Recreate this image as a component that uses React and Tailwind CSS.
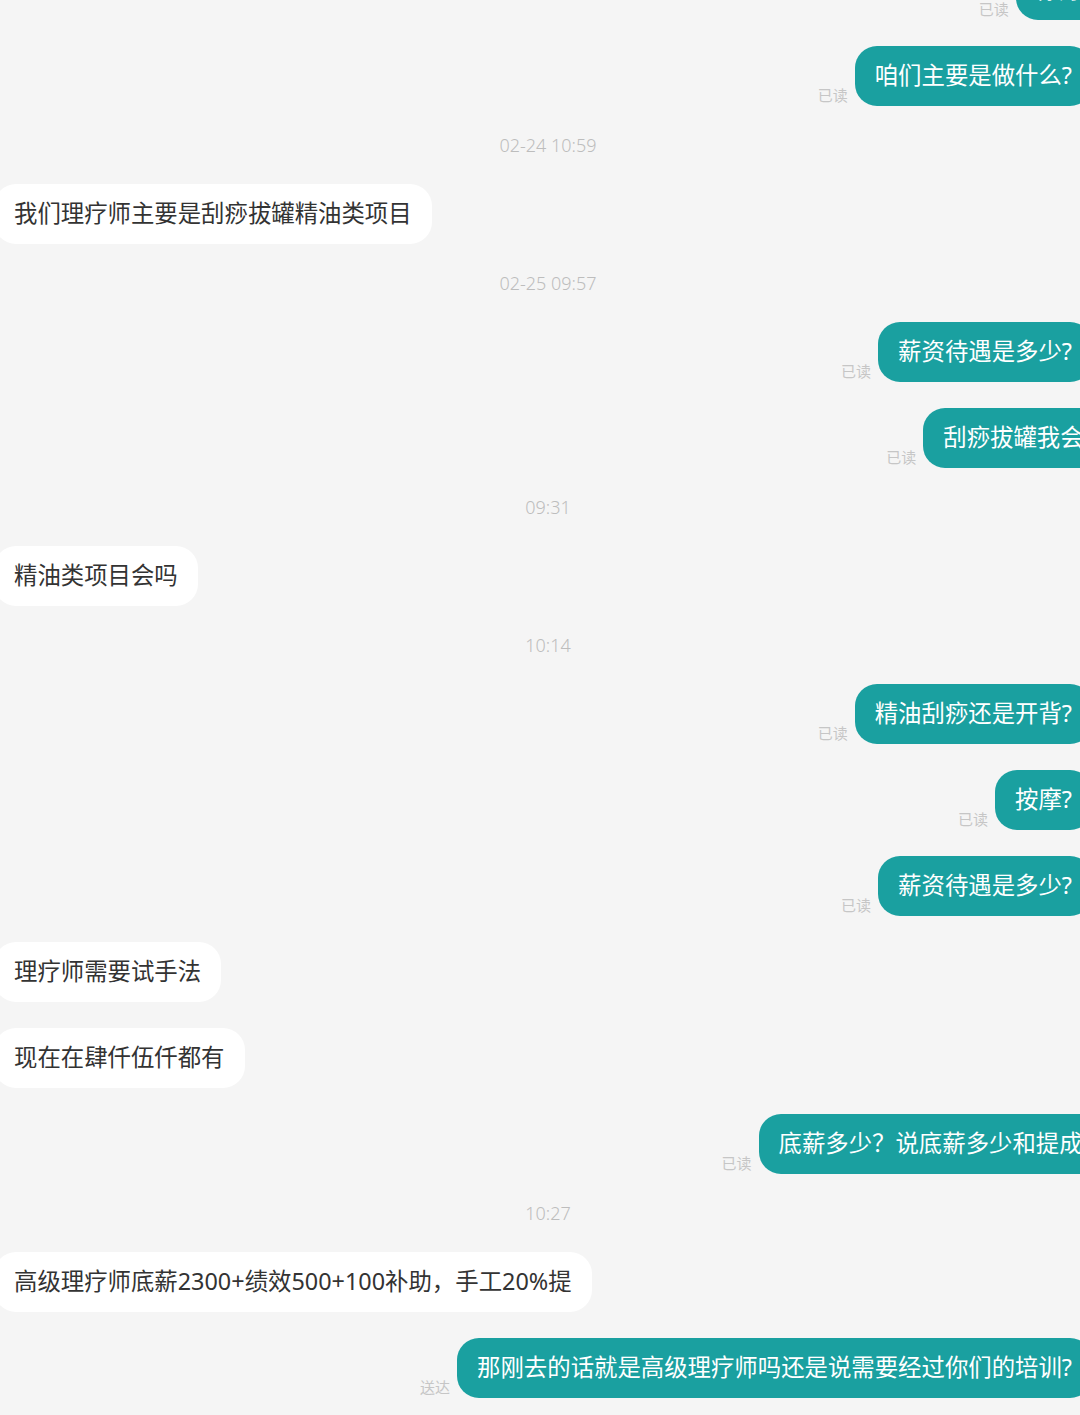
import React from 'react';

const FONT = { fontFamily: '"Noto Sans", "Noto Sans CJK SC", sans-serif' };

const items = [
  { type: 'out', text: '你好呀', status: '已读', shift: 'mr-[-24px]' },
  { type: 'out', text: '咱们主要是做什么?', status: '已读' },
  { type: 'time', text: '02-24 10:59' },
  { type: 'in', text: '我们理疗师主要是刮痧拔罐精油类项目' },
  { type: 'time', text: '02-25 09:57' },
  { type: 'out', text: '薪资待遇是多少?', status: '已读' },
  { type: 'out', text: '刮痧拔罐我会的', status: '已读', shift: 'mr-[-25px]' },
  { type: 'time', text: '09:31' },
  { type: 'in', text: '精油类项目会吗' },
  { type: 'time', text: '10:14' },
  { type: 'out', text: '精油刮痧还是开背?', status: '已读' },
  { type: 'out', text: '按摩?', status: '已读' },
  { type: 'out', text: '薪资待遇是多少?', status: '已读' },
  { type: 'in', text: '理疗师需要试手法' },
  { type: 'in', text: '现在在肆仟伍仟都有' },
  { type: 'out', text: '底薪多少？说底薪多少和提成呀', status: '已读', shift: 'mr-[-24px]' },
  { type: 'time', text: '10:27' },
  { type: 'in', text: '高级理疗师底薪2300+绩效500+100补助，手工20%提' },
  { type: 'out', text: '那刚去的话就是高级理疗师吗还是说需要经过你们的培训?', status: '送达' },
];

const TimeStamp = ({ text }) => (
  <div className="h-[26px] flex items-center justify-center text-[18px] font-light text-[#bdbdbd]">
    {text}
  </div>
);

const Incoming = ({ text }) => (
  <div className="flex justify-start">
    <div className="h-[60px] flex items-center px-5 rounded-[22px] bg-white text-[23.4px] text-[#333333] whitespace-nowrap">
      {text}
    </div>
  </div>
);

const Outgoing = ({ text, status, shift }) => (
  <div className={`flex justify-end items-end gap-[7px] ${shift || 'mr-[10px]'}`}>
    <span className="text-[15px] leading-[20px] mb-[1px] text-[#c6c6c6]">{status}</span>
    <div className="h-[60px] flex items-center px-5 rounded-[22px] bg-[#1aa0a0] text-[23.4px] text-white whitespace-nowrap">
      {text}
    </div>
  </div>
);

export default function App() {
  return (
    <div className="w-[1080px] h-[1415px] overflow-hidden bg-[#f5f5f5]" style={FONT}>
      <div className="ml-[-6px] w-[1108px] mt-[-40px] flex flex-col gap-[26px]">
        {items.map((m, i) => {
          if (m.type === 'time') return <TimeStamp key={i} text={m.text} />;
          if (m.type === 'in') return <Incoming key={i} text={m.text} />;
          return <Outgoing key={i} text={m.text} status={m.status} shift={m.shift} />;
        })}
      </div>
    </div>
  );
}
